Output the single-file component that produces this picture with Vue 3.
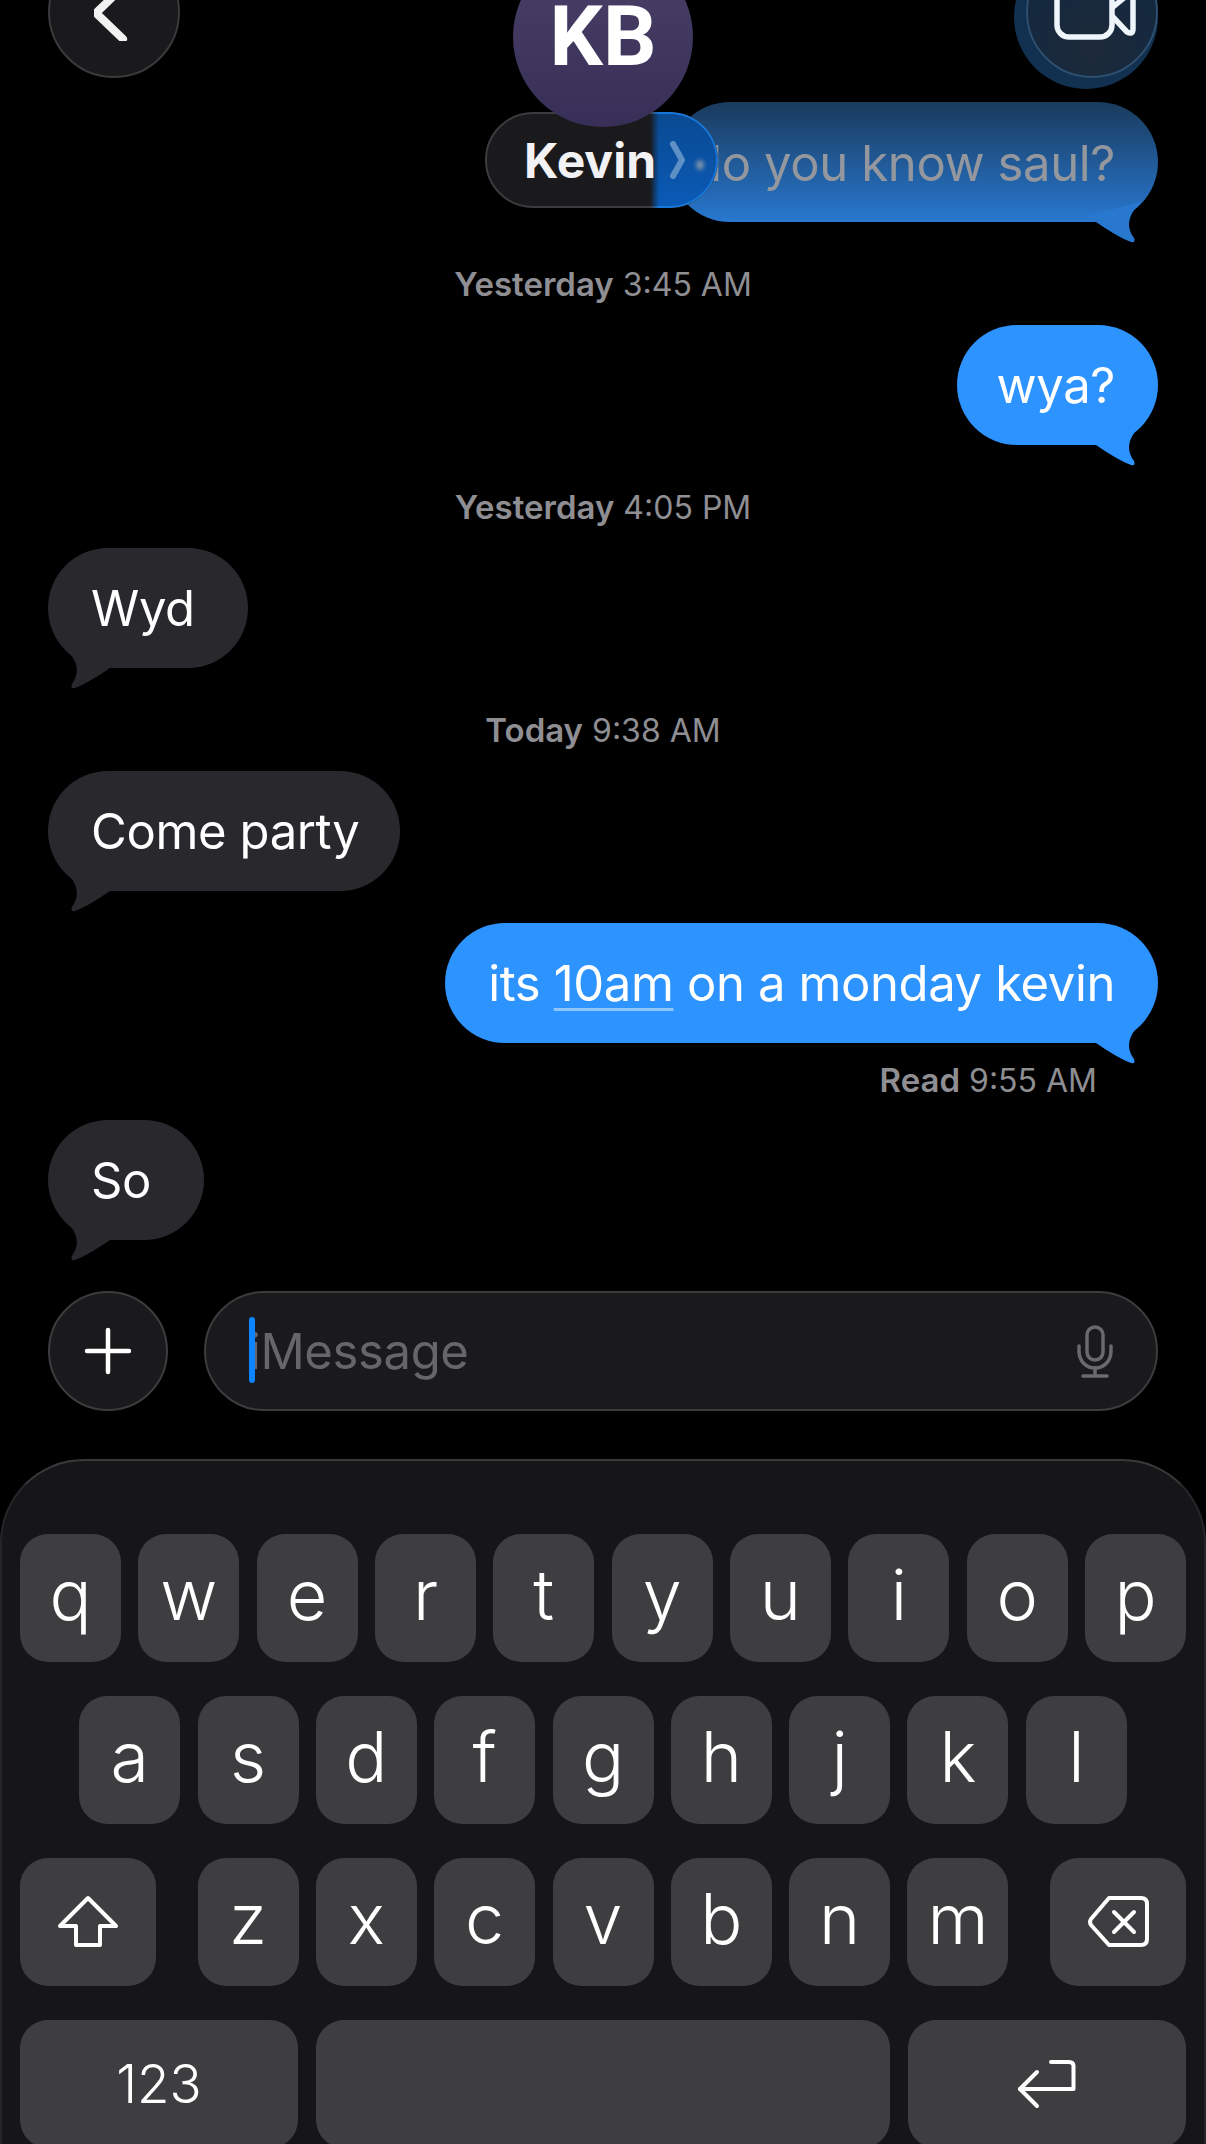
<template>
  <div class="phone">
    <!-- top bar floats over the thread -->
    <button class="round back">
      <svg width="40" height="56" viewBox="0 0 40 56"><path d="M29 2 L2 28 L29 54" /></svg>
    </button>
    <div class="avatar">KB</div>
    <div class="name-pill">
      <span>Kevin</span>
      <div class="pill-glass">
        <svg width="18" height="38" viewBox="0 0 18 38"><path d="M4 3 L13 19 L4 35" /></svg>
        <i class="glass-dot"></i>
      </div>
    </div>
    <button class="round video">
      <svg width="90" height="75" viewBox="0 -30 90 75">
        <rect x="7" y="-30" width="55" height="67" rx="12" />
        <path d="M63 7 L75 -3" />
        <path d="M63 17 L77 32 Q83 35 83 29 V-10" />
      </svg>
    </button>

    <div class="thread">
      <template v-for="item in thread" :key="item.id">
        <div v-if="item.stamp" class="stamp" :class="{ read: item.read }">
          <b>{{ item.stamp }}</b> {{ item.time }}
        </div>
        <div v-else class="bubble" :class="[item.from, item.cls]">
          <span v-if="item.link">{{ item.before }}<u>{{ item.link }}</u>{{ item.after }}</span>
          <span v-else>{{ item.text }}</span>
          <svg class="tail" width="80" height="50" viewBox="-75 -25 80 50">
            <path d="M-72 -6 L-62 0 C-50 8 -38 16 -27 20 Q-22 21 -24 16 C-31 6 -32 -5 -17 -20 Z" />
          </svg>
        </div>
      </template>
    </div>

    <div class="composer">
      <button class="plus"><svg width="48" height="48" viewBox="0 0 48 48"><path d="M24 3 V45 M3 24 H45" /></svg></button>
      <div class="field">
        <i class="caret"></i>
        <span class="placeholder">iMessage</span>
        <svg class="mic" width="36" height="53" viewBox="0 0 36 53">
          <rect x="10" y="2" width="16" height="33" rx="8" />
          <path d="M2 21 V26 C2 36 9 43 18 43 C27 43 34 36 34 26 V21" />
          <path d="M18 43 V51 M6 51 H30" />
        </svg>
      </div>
    </div>

    <div class="keyboard">
      <div v-for="(row, i) in rows" :key="i" class="row">
        <div v-for="k in row" :key="k" class="key">{{ k }}</div>
      </div>
      <div class="row">
        <div class="key fn">
          <svg width="62" height="54" viewBox="0 0 62 54"><path d="M31 4 L59 32 H43 V51 H19 V32 H3 Z" /></svg>
        </div>
        <div class="letters">
          <div v-for="k in lastRow" :key="k" class="key">{{ k }}</div>
        </div>
        <div class="key fn">
          <svg width="64" height="54" viewBox="0 0 64 54">
            <path d="M23 4 H55 Q61 4 61 10 V45 Q61 51 55 51 H23 L5 31 Q3 28 5 25 Z" />
            <path d="M28 18 L48 38 M48 18 L28 38" />
          </svg>
        </div>
      </div>
      <div class="row bottom">
        <div class="key wide">123</div>
        <div class="key space"></div>
        <div class="key wide">
          <svg width="62" height="54" viewBox="0 0 62 54">
            <path d="M35 5 H53 Q57.5 5 57.5 9 V32 H4" />
            <path d="M21 15 L4 32 L21 49" />
          </svg>
        </div>
      </div>
    </div>
  </div>
</template>

<script setup>
const thread = [
  { id: 1, text: 'do you know saul?', from: 'out', cls: 'faded' },
  { id: 2, stamp: 'Yesterday', time: '3:45 AM' },
  { id: 3, text: 'wya?', from: 'out', cls: 'tight' },
  { id: 4, stamp: 'Yesterday', time: '4:05 PM' },
  { id: 5, text: 'Wyd', from: 'in', cls: 'short' },
  { id: 6, stamp: 'Today', time: '9:38 AM' },
  { id: 7, text: 'Come party', from: 'in' },
  { id: 8, before: 'its ', link: '10am', after: ' on a monday kevin', from: 'out' },
  { id: 9, stamp: 'Read', time: '9:55 AM', read: true },
  { id: 10, text: 'So', from: 'in', cls: 'short' }
]

const rows = ['qwertyuiop'.split(''), 'asdfghjkl'.split('')]
const lastRow = 'zxcvbnm'.split('')
</script>

<style>
html, body {
  margin: 0;
  background: #000;
}
</style>

<style scoped>
.phone {
  position: relative;
  width: 1206px;
  height: 2144px;
  overflow: hidden;
  background: #000;
  color: #fff;
  font-family: Inter, "Liberation Sans", sans-serif;
}

.round {
  position: absolute;
  top: -54px;
  box-sizing: border-box;
  width: 132px;
  height: 132px;
  padding: 0;
  border-radius: 50%;
  display: flex;
  justify-content: center;
  align-items: flex-start;
}

.round path, .round rect, .name-pill path {
  fill: none;
  stroke-linecap: round;
  stroke-linejoin: round;
}

.back {
  left: 48px;
  background: #1a1a1c;
  border: 2px solid #3a3a3c;
}

.back svg {
  margin-top: 37px;
}

.back path {
  stroke: #f2f2f2;
  stroke-width: 8;
}

.video {
  left: 1026px;
  background: radial-gradient(circle at 50% 78%, #1d2a39, #13283f 70%);
  border: 2px solid #2e5072;
  box-shadow: -6px 5px 0 6px #12304f;
}

.video svg {
  margin: 22px 0 0 6px;
  overflow: visible;
}

.video rect, .video path {
  stroke: #eef5fb;
  stroke-width: 5.5;
}

.avatar {
  position: absolute;
  left: 513px;
  top: -53px;
  z-index: 2;
  width: 180px;
  height: 180px;
  border-radius: 50%;
  background: linear-gradient(#4a4168, #372f57);
  display: flex;
  align-items: center;
  justify-content: center;
  font-family: Roboto, Inter, sans-serif;
  font-size: 84px;
  font-weight: 700;
  line-height: 0.85;
}

.name-pill {
  position: absolute;
  left: 485px;
  top: 112px;
  z-index: 1;
  box-sizing: border-box;
  width: 233px;
  height: 96px;
  border: 2px solid #3c3c3e;
  border-radius: 48px;
  background: #1a1a1c;
  display: flex;
  align-items: center;
  padding-left: 37px;
  font-size: 48px;
  font-weight: 700;
  color: #f2f2f4;
}

.name-pill span {
  position: relative;
  z-index: 1;
}

.pill-glass {
  position: absolute;
  right: -2px;
  top: -2px;
  width: 68px;
  height: 96px;
  box-sizing: border-box;
  border: 2px solid #1778dc;
  border-left: 0;
  border-radius: 0 48px 48px 0;
  background: linear-gradient(#0a4a92, #0a5ab6);
  -webkit-mask-image: linear-gradient(90deg, transparent, #000 9px);
  mask-image: linear-gradient(90deg, transparent, #000 9px);
}

.pill-glass svg {
  position: absolute;
  left: 19px;
  top: 27px;
}

.pill-glass path {
  stroke: #5e90c6;
  stroke-width: 6;
}

.glass-dot {
  position: absolute;
  left: 46px;
  top: 46px;
  width: 8px;
  height: 10px;
  border-radius: 50%;
  background: #7c93ac;
  filter: blur(2px);
}

.thread {
  display: flex;
  flex-direction: column;
  padding: 102px 48px 0;
}

.bubble {
  position: relative;
  box-sizing: border-box;
  height: 120px;
  padding: 0 43px;
  border-radius: 60px;
  display: flex;
  align-items: center;
  font-size: 49px;
  letter-spacing: -0.38px;
  white-space: pre;
}

.bubble.out {
  align-self: flex-end;
  background: #2d93ff;
}

.bubble.tight {
  padding-left: 40px;
}

.bubble.in {
  align-self: flex-start;
  padding: 0 41px 0 43px;
  background: #29292d;
}

.bubble.in.short {
  padding-right: 53px;
}

.in + .out {
  margin-top: 32px;
}

.tail {
  position: absolute;
  right: -5px;
  bottom: -25px;
}

.out .tail {
  fill: #2d93ff;
}

.in .tail {
  right: auto;
  left: -5px;
  transform: scaleX(-1);
  fill: #29292d;
}

.bubble.faded {
  padding: 3px 43px 0 22px;
  background: linear-gradient(#1a3a5c, #2878d0);
  color: #94989e;
}

.faded .tail {
  fill: #2878d0;
}

.bubble u {
  text-decoration-color: #8fc5ff;
  text-decoration-thickness: 3px;
  text-underline-offset: 7px;
}

.stamp {
  height: 42px;
  margin: 41px 0 20px;
  text-align: center;
  font-size: 32px;
  line-height: 42px;
  color: #8e8e93;
}

.stamp b {
  font-size: 33px;
  font-weight: 600;
}

.stamp.read {
  margin: 16px 0 19px;
  padding-right: 61px;
  text-align: right;
}

.composer {
  display: flex;
  gap: 36px;
  margin: 51px 48px 0;
}

.plus {
  box-sizing: border-box;
  flex: none;
  width: 120px;
  height: 120px;
  padding: 0;
  border: 2px solid #3c3c3e;
  border-radius: 50%;
  background: #1a1a1c;
  display: flex;
  align-items: center;
  justify-content: center;
}

.plus path {
  stroke: #fff;
  stroke-width: 4.5;
  stroke-linecap: round;
}

.field {
  position: relative;
  box-sizing: border-box;
  flex: 1;
  height: 120px;
  border: 2px solid #3c3c3e;
  border-radius: 60px;
  background: #1a1a1c;
  display: flex;
  align-items: center;
  padding-left: 43px;
  font-size: 49px;
  letter-spacing: -0.38px;
  color: #66666a;
}

.caret {
  position: absolute;
  left: 43px;
  top: 24px;
  width: 6px;
  height: 66px;
  border-radius: 3px;
  background: #0a84ff;
}

.mic {
  position: absolute;
  right: 43px;
  top: 32px;
}

.mic rect, .mic path {
  fill: none;
  stroke: #6a6a6c;
  stroke-width: 3.5;
  stroke-linecap: round;
}

.keyboard {
  box-sizing: border-box;
  margin-top: 48px;
  height: 690px;
  padding: 73px 18px 0;
  border: 2px solid #26262a;
  border-top-color: #3a3a3c;
  border-bottom: 0;
  border-radius: 84px 84px 0 0;
  background: #161618;
  display: flex;
  flex-direction: column;
  gap: 34px;
}

.row, .letters {
  display: flex;
  justify-content: center;
  gap: 17.33px;
}

.row {
  justify-content: space-between;
}

.row:nth-child(2) {
  justify-content: center;
}

.key {
  flex: none;
  box-sizing: border-box;
  width: 101px;
  height: 128px;
  padding-bottom: 6px;
  border-radius: 28px;
  background: #3e3e40;
  display: flex;
  align-items: center;
  justify-content: center;
  font-size: 70px;
  font-weight: 300;
  line-height: 1;
}

.key.fn {
  width: 136px;
  padding-bottom: 2px;
}

.key svg {
  fill: none;
  stroke: #fff;
  stroke-width: 4;
  stroke-linecap: round;
  stroke-linejoin: round;
  overflow: visible;
}

.bottom .wide {
  width: 278px;
  padding-bottom: 0;
  font-size: 53px;
}

.bottom .space {
  width: 574px;
}
</style>
